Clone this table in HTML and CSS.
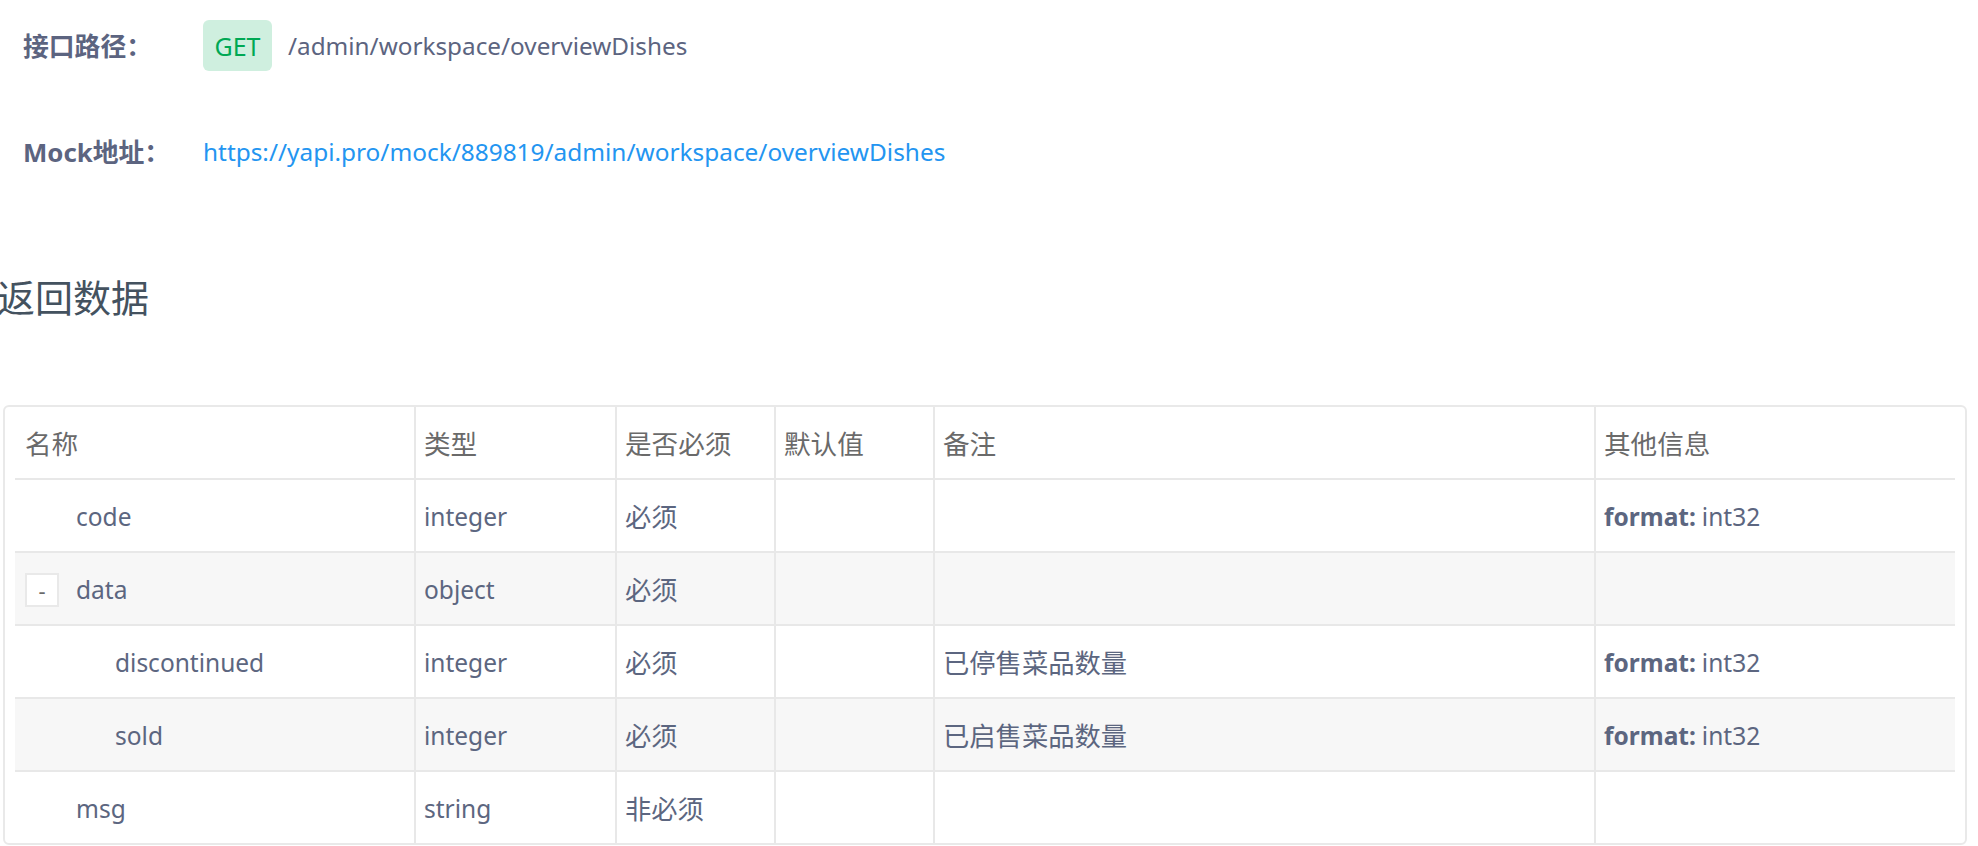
FILE: index.html
```html
<!DOCTYPE html>
<html lang="zh-CN">
<head>
<meta charset="utf-8">
<title>接口详情</title>
<link rel="stylesheet" href="styles.css">
</head>
<body>
<div class="page">
  <div class="info-row info-path">
    <span class="info-label">接口路径：</span>
    <span class="info-value">
      <span class="method-tag">GET</span>
      <span class="api-path">/admin/workspace/overviewDishes</span>
    </span>
  </div>
  <div class="info-row info-mock">
    <span class="info-label">Mock地址：</span>
    <span class="info-value">
      <a class="mock-link" href="#">https://yapi.pro/mock/889819/admin/workspace/overviewDishes</a>
    </span>
  </div>

  <h2 class="section-title">返回数据</h2>

  <div class="table-wrap">
    <div class="grid-table">
      <div class="grid-row head-row">
        <div class="cell first">名称</div>
        <div class="cell">类型</div>
        <div class="cell">是否必须</div>
        <div class="cell">默认值</div>
        <div class="cell">备注</div>
        <div class="cell">其他信息</div>
      </div>
      <div class="grid-row">
        <div class="cell first"><span class="name lvl0">code</span></div>
        <div class="cell">integer</div>
        <div class="cell"><span class="zh">必须</span></div>
        <div class="cell"></div>
        <div class="cell"></div>
        <div class="cell"><b class="meta-key">format:</b> int32</div>
      </div>
      <div class="grid-row striped">
        <div class="cell first"><span class="expand-btn">-</span><span class="name">data</span></div>
        <div class="cell">object</div>
        <div class="cell"><span class="zh">必须</span></div>
        <div class="cell"></div>
        <div class="cell"></div>
        <div class="cell"></div>
      </div>
      <div class="grid-row">
        <div class="cell first"><span class="name lvl1">discontinued</span></div>
        <div class="cell">integer</div>
        <div class="cell"><span class="zh">必须</span></div>
        <div class="cell"></div>
        <div class="cell"><span class="zh">已停售菜品数量</span></div>
        <div class="cell"><b class="meta-key">format:</b> int32</div>
      </div>
      <div class="grid-row striped">
        <div class="cell first"><span class="name lvl1">sold</span></div>
        <div class="cell">integer</div>
        <div class="cell"><span class="zh">必须</span></div>
        <div class="cell"></div>
        <div class="cell"><span class="zh">已启售菜品数量</span></div>
        <div class="cell"><b class="meta-key">format:</b> int32</div>
      </div>
      <div class="grid-row last-row">
        <div class="cell first"><span class="name lvl0">msg</span></div>
        <div class="cell">string</div>
        <div class="cell"><span class="zh">非必须</span></div>
        <div class="cell"></div>
        <div class="cell"></div>
        <div class="cell"></div>
      </div>
    </div>
  </div>
</div>
</body>
</html>
```

FILE: styles.css
```css
* {
  box-sizing: border-box;
}

html, body {
  margin: 0;
  padding: 0;
  background: #ffffff;
}

body {
  font-family: "Noto Sans", "Noto Sans CJK SC", sans-serif;
  color: #5c6680;
  overflow: hidden;
}

.page {
  width: 1978px;
}

.info-row {
  display: flex;
  align-items: center;
  height: 51px;
  padding-left: 23px;
}

.info-path {
  margin-top: 20px;
}

.info-mock {
  margin-top: 55px;
}

.info-label {
  width: 180px;
  flex: none;
  font-weight: 700;
  font-size: 25.8px;
  line-height: 34px;
  color: #5c6480;
}

.info-value {
  display: flex;
  align-items: center;
}

.method-tag {
  display: inline-flex;
  align-items: center;
  justify-content: center;
  width: 69px;
  height: 51px;
  border-radius: 6px;
  background: #cfefdf;
  color: #00a854;
  font-size: 25px;
  line-height: 32px;
  margin-right: 16px;
}

.api-path {
  font-size: 24.3px;
  line-height: 32px;
  color: #5c6480;
}

.mock-link {
  font-size: 24.4px;
  line-height: 32px;
  color: #2395f1;
  text-decoration: none;
}

.section-title {
  margin: 96px 0 84px -3px;
  font-size: 38px;
  line-height: 48px;
  font-weight: 400;
  color: #44525f;
}

.table-wrap {
  margin-left: 3px;
  width: 1964px;
  border: 2px solid #e9e9e9;
  border-radius: 6px;
  padding: 0 10px;
}

.grid-table {
  width: 1940px;
}

.grid-row {
  display: grid;
  grid-template-columns: 399px 201px 159px 159px 661px 361px;
  height: 73px;
  border-bottom: 2px solid #e8e8e8;
  font-size: 24.5px;
  line-height: 34px;
}

.grid-row.last-row {
  border-bottom: none;
  height: 71px;
}

.grid-row.striped {
  background: #f7f7f7;
}

.head-row {
  color: #6a6a6a;
  font-size: 26.6px;
}

.zh {
  font-size: 26.3px;
}

.cell {
  display: flex;
  align-items: center;
  padding-left: 8px;
  padding-top: 3px;
  border-left: 2px solid #e8e8e8;
  white-space: nowrap;
}

.cell.first {
  border-left: none;
  padding-left: 10px;
}

.name.lvl0 {
  padding-left: 51px;
}

.name.lvl1 {
  padding-left: 90px;
}

.expand-btn {
  display: inline-flex;
  align-items: center;
  justify-content: center;
  width: 34px;
  height: 34px;
  border: 2px solid #e9e9e9;
  background: #ffffff;
  color: #6a6a6a;
  font-size: 22px;
  margin-right: 17px;
}

.meta-key {
  font-weight: 700;
  margin-right: 6px;
}
```
